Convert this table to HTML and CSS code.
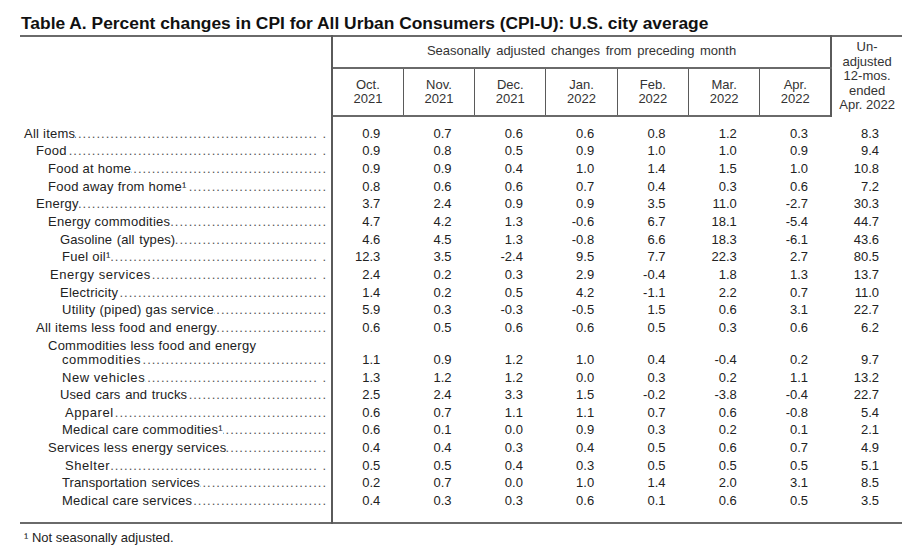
FILE: index.html
```html
<!DOCTYPE html>
<html lang="en">
<head>
<meta charset="utf-8">
<title>Table A. Percent changes in CPI</title>
<link rel="stylesheet" href="styles.css">
</head>
<body>
<div class="page">
  <h1 class="title">Table A. Percent changes in CPI for All Urban Consumers (CPI-U): U.S. city average</h1>
  <table class="cpi">
    <colgroup>
      <col class="c-stub">
      <col class="c-num"><col class="c-num"><col class="c-num"><col class="c-num"><col class="c-num"><col class="c-num"><col class="c-num">
      <col class="c-last">
    </colgroup>
    <thead>
      <tr class="h1">
        <th class="stub-h" rowspan="2"></th>
        <th class="group" colspan="7">Seasonally adjusted changes from preceding month</th>
        <th class="last-h" rowspan="2">Un-<br>adjusted<br>12-mos.<br>ended<br>Apr. 2022</th>
      </tr>
      <tr class="h2">
        <th>Oct.<br>2021</th>
        <th>Nov.<br>2021</th>
        <th>Dec.<br>2021</th>
        <th>Jan.<br>2022</th>
        <th>Feb.<br>2022</th>
        <th>Mar.<br>2022</th>
        <th class="apr">Apr.<br>2022</th>
      </tr>
    </thead>
    <tbody>
      <tr class="spacer top"><td class="stub"></td><td colspan="8"></td></tr>
      <tr><td class="stub"><div class="lbl l0"><span>All items</span><span class="lead gap"></span></div></td><td>0.9</td><td>0.7</td><td>0.6</td><td>0.6</td><td>0.8</td><td>1.2</td><td>0.3</td><td>8.3</td></tr>
      <tr><td class="stub"><div class="lbl l1"><span>Food</span><span class="lead gap"></span></div></td><td>0.9</td><td>0.8</td><td>0.5</td><td>0.9</td><td>1.0</td><td>1.0</td><td>0.9</td><td>9.4</td></tr>
      <tr><td class="stub"><div class="lbl l2"><span>Food at home</span><span class="lead"></span></div></td><td>0.9</td><td>0.9</td><td>0.4</td><td>1.0</td><td>1.4</td><td>1.5</td><td>1.0</td><td>10.8</td></tr>
      <tr><td class="stub"><div class="lbl l2"><span>Food away from home¹</span><span class="lead"></span></div></td><td>0.8</td><td>0.6</td><td>0.6</td><td>0.7</td><td>0.4</td><td>0.3</td><td>0.6</td><td>7.2</td></tr>
      <tr><td class="stub"><div class="lbl l1"><span>Energy</span><span class="lead"></span></div></td><td>3.7</td><td>2.4</td><td>0.9</td><td>0.9</td><td>3.5</td><td>11.0</td><td>-2.7</td><td>30.3</td></tr>
      <tr><td class="stub"><div class="lbl l2"><span>Energy commodities</span><span class="lead"></span></div></td><td>4.7</td><td>4.2</td><td>1.3</td><td>-0.6</td><td>6.7</td><td>18.1</td><td>-5.4</td><td>44.7</td></tr>
      <tr><td class="stub"><div class="lbl l3"><span class="ws">Gasoline (all types)</span><span class="lead"></span></div></td><td>4.6</td><td>4.5</td><td>1.3</td><td>-0.8</td><td>6.6</td><td>18.3</td><td>-6.1</td><td>43.6</td></tr>
      <tr><td class="stub"><div class="lbl l3 r"><span>Fuel oil¹</span><span class="lead gap"></span></div></td><td>12.3</td><td>3.5</td><td>-2.4</td><td>9.5</td><td>7.7</td><td>22.3</td><td>2.7</td><td>80.5</td></tr>
      <tr><td class="stub"><div class="lbl l2 r"><span class="ls">Energy services</span><span class="lead gap"></span></div></td><td>2.4</td><td>0.2</td><td>0.3</td><td>2.9</td><td>-0.4</td><td>1.8</td><td>1.3</td><td>13.7</td></tr>
      <tr><td class="stub"><div class="lbl l3"><span>Electricity</span><span class="lead"></span></div></td><td>1.4</td><td>0.2</td><td>0.5</td><td>4.2</td><td>-1.1</td><td>2.2</td><td>0.7</td><td>11.0</td></tr>
      <tr><td class="stub"><div class="lbl l3 r"><span>Utility (piped) gas service</span><span class="lead"></span></div></td><td>5.9</td><td>0.3</td><td>-0.3</td><td>-0.5</td><td>1.5</td><td>0.6</td><td>3.1</td><td>22.7</td></tr>
      <tr><td class="stub"><div class="lbl l1"><span>All items less food and energy</span><span class="lead"></span></div></td><td>0.6</td><td>0.5</td><td>0.6</td><td>0.6</td><td>0.5</td><td>0.3</td><td>0.6</td><td>6.2</td></tr>
      <tr class="two"><td class="stub"><div class="first l2">Commodities less food and energy</div><div class="lbl l3 r"><span class="ls">commodities</span><span class="lead"></span></div></td><td>1.1</td><td>0.9</td><td>1.2</td><td>1.0</td><td>0.4</td><td>-0.4</td><td>0.2</td><td>9.7</td></tr>
      <tr><td class="stub"><div class="lbl l3 r"><span class="ls">New vehicles</span><span class="lead gap"></span></div></td><td>1.3</td><td>1.2</td><td>1.2</td><td>0.0</td><td>0.3</td><td>0.2</td><td>1.1</td><td>13.2</td></tr>
      <tr><td class="stub"><div class="lbl l3"><span class="ws">Used cars and trucks</span><span class="lead"></span></div></td><td>2.5</td><td>2.4</td><td>3.3</td><td>1.5</td><td>-0.2</td><td>-3.8</td><td>-0.4</td><td>22.7</td></tr>
      <tr><td class="stub"><div class="lbl l3 rr"><span class="ls">Apparel</span><span class="lead"></span></div></td><td>0.6</td><td>0.7</td><td>1.1</td><td>1.1</td><td>0.7</td><td>0.6</td><td>-0.8</td><td>5.4</td></tr>
      <tr><td class="stub"><div class="lbl l3 r"><span>Medical care commodities¹</span><span class="lead"></span></div></td><td>0.6</td><td>0.1</td><td>0.0</td><td>0.9</td><td>0.3</td><td>0.2</td><td>0.1</td><td>2.1</td></tr>
      <tr><td class="stub"><div class="lbl l2"><span>Services less energy services</span><span class="lead"></span></div></td><td>0.4</td><td>0.4</td><td>0.3</td><td>0.4</td><td>0.5</td><td>0.6</td><td>0.7</td><td>4.9</td></tr>
      <tr><td class="stub"><div class="lbl l3 rr"><span class="ls">Shelter</span><span class="lead gap"></span></div></td><td>0.5</td><td>0.5</td><td>0.4</td><td>0.3</td><td>0.5</td><td>0.5</td><td>0.5</td><td>5.1</td></tr>
      <tr><td class="stub"><div class="lbl l3 r"><span class="ws">Transportation services</span><span class="lead"></span></div></td><td>0.2</td><td>0.7</td><td>0.0</td><td>1.0</td><td>1.4</td><td>2.0</td><td>3.1</td><td>8.5</td></tr>
      <tr><td class="stub"><div class="lbl l3 r"><span>Medical care services</span><span class="lead"></span></div></td><td>0.4</td><td>0.3</td><td>0.3</td><td>0.6</td><td>0.1</td><td>0.6</td><td>0.5</td><td>3.5</td></tr>
      <tr class="spacer bottom"><td class="stub"></td><td colspan="8"></td></tr>
    </tbody>
  </table>
  <p class="note">¹ Not seasonally adjusted.</p>
</div>
</body>
</html>
```

FILE: styles.css
```css
html, body {
  margin: 0;
  padding: 0;
  background: #ffffff;
}

body {
  font-family: "Liberation Sans", Arial, sans-serif;
  color: #222222;
  font-size: 13px;
}

.page {
  padding: 13px 0 0 20px;
  width: 882px;
}

.title {
  margin: 0 0 2px 1px;
  font-size: 17.4px;
  line-height: 20px;
  font-weight: bold;
  color: #111111;
}

.cpi {
  width: 882px;
  border-collapse: collapse;
  table-layout: fixed;
  border-top: 2px solid #6a6a6a;
  border-bottom: 2px solid #6a6a6a;
}

.c-stub { width: 312px; }
.c-num { width: 71.3px; }
.c-last { width: 71px; }

.cpi th {
  font-weight: normal;
  color: #333333;
  padding: 0;
  text-align: center;
  line-height: 14px;
}

.stub-h {
  border-right: 2px solid #5a5a5a;
}

.h1 .group {
  height: 28px;
  border-bottom: 2px solid #6a6a6a;
  word-spacing: 2px;
  vertical-align: middle;
  padding-bottom: 2px;
}

.last-h {
  border-left: 2px solid #5a5a5a;
  line-height: 14.5px !important;
  vertical-align: top;
  padding-top: 3px !important;
}

.h2 th {
  height: 46px;
  border-right: 1.5px solid #5a5a5a;
  border-bottom: 2px solid #6a6a6a;
}

.h2 th.apr {
  border-right: 2px solid #5a5a5a;
}

.cpi td {
  padding: 0 23px 0 0;
  height: 17.65px;
  line-height: 14px;
  text-align: right;
  vertical-align: middle;
  white-space: nowrap;
}

.cpi td.stub {
  padding: 0 4px 0 0;
  text-align: left;
  border-right: 2px solid #5a5a5a;
}

.cpi tr.spacer.top td { height: 8px; }
.cpi tr.spacer.bottom td { height: 12px; }

.cpi tr.two td {
  vertical-align: bottom;
  padding-top: 2px;
  padding-bottom: 2px;
}

.lbl {
  display: flex;
  align-items: baseline;
  white-space: nowrap;
}

.lbl > span:first-child,
.first {
  letter-spacing: 0.25px;
}

.first {
  white-space: nowrap;
}

.l0 { padding-left: 4px; }
.l1 { padding-left: 16px; }
.l2 { padding-left: 28px; }
.l3 { padding-left: 40px; }
.l2.r { padding-left: 30px; }
.l3.r { padding-left: 42px; }
.l3.rr { padding-left: 45px; }

.lbl > span.ws { word-spacing: 1px; letter-spacing: 0.1px; }
.lbl > span.ls { letter-spacing: 0.55px; }

.lead {
  flex: 1;
  min-width: 0;
  overflow: hidden;
  display: flex;
  justify-content: flex-end;
  color: #555555;
}

.lead::after {
  content: "..............................................................................................";
  flex-shrink: 0;
  letter-spacing: 1px;
}

.lead.gap::after {
  content: "..............................................................................................    .";
}

.note {
  margin: 6px 0 0 4px;
  font-size: 13px;
  line-height: 16px;
  color: #222222;
}
```
